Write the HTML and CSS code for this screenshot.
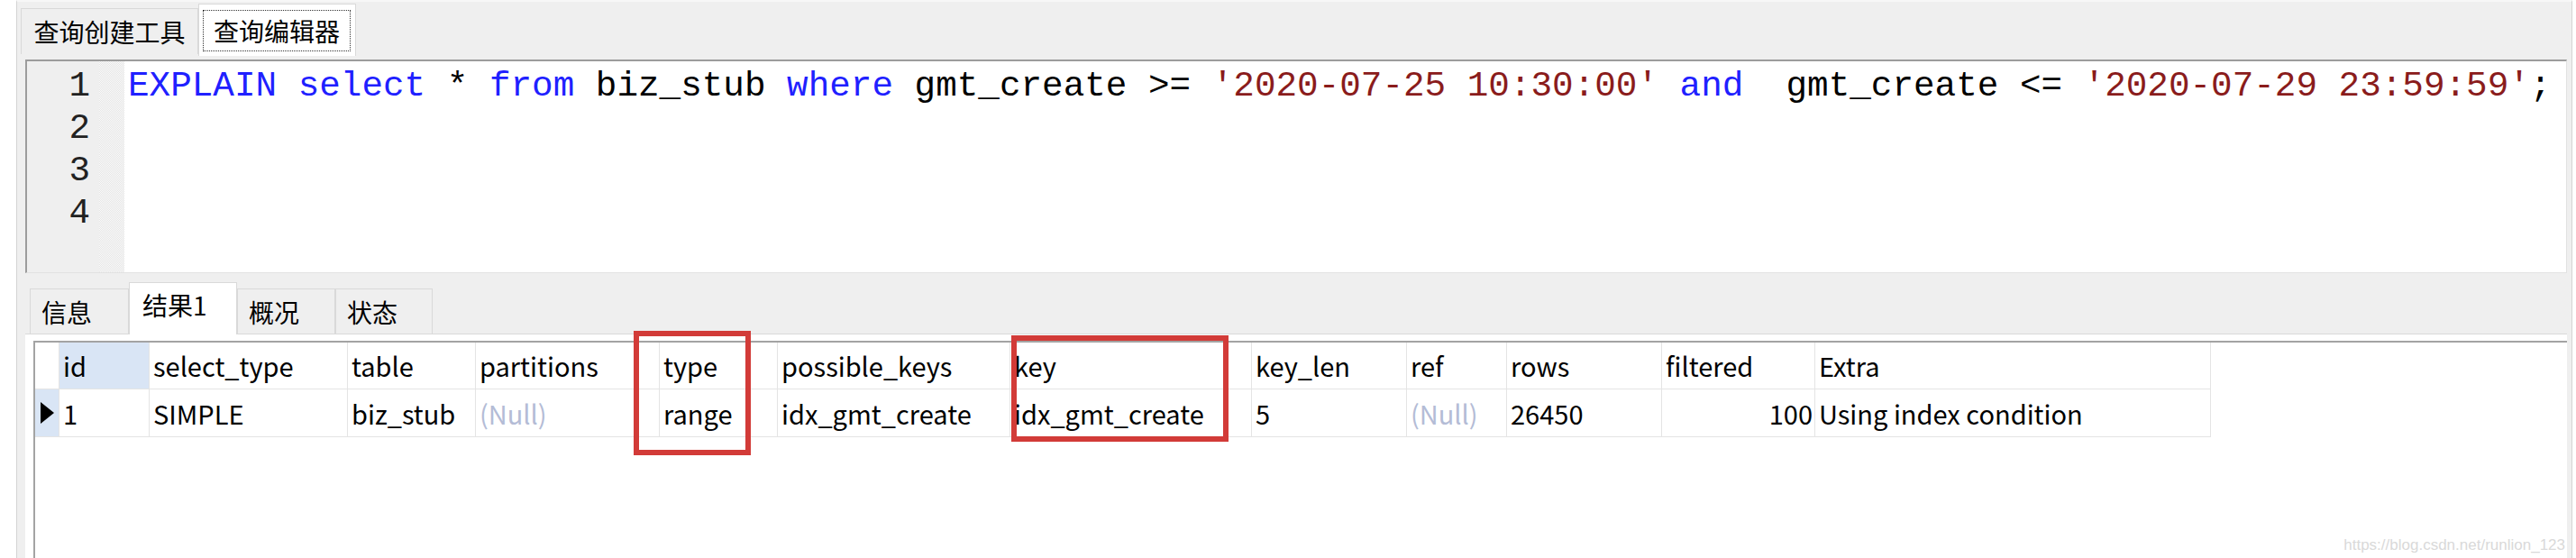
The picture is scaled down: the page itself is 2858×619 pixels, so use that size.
FILE: index.html
```html
<!DOCTYPE html>
<html lang="zh-CN">
<head>
<meta charset="utf-8">
<title>查询编辑器</title>
<link rel="stylesheet" href="styles.css">
</head>
<body>
<div class="app">
  <div class="top-tabs">
    <div class="tab">查询创建工具</div>
    <div class="tab active"><span class="focus">查询编辑器</span></div>
  </div>
  <div class="editor">
    <div class="gutter">
      <div class="ln">1</div>
      <div class="ln">2</div>
      <div class="ln">3</div>
      <div class="ln">4</div>
    </div>
    <div class="strip"></div>
    <div class="code">
      <div class="line"><span class="kw">EXPLAIN</span> <span class="kw">select</span> * <span class="kw">from</span> biz_stub <span class="kw">where</span> gmt_create &gt;= <span class="str">'2020-07-25 10:30:00'</span> <span class="kw">and</span>  gmt_create &lt;= <span class="str">'2020-07-29 23:59:59'</span>;</div>
      <div class="line"></div>
      <div class="line"></div>
      <div class="line"></div>
    </div>
  </div>
  <div class="result">
    <div class="bottom-tabs">
      <div class="btab w110">信息</div>
      <div class="btab active w120">结果1</div>
      <div class="btab w109">概况</div>
      <div class="btab w108">状态</div>
    </div>
    <div class="panel">
      <div class="grid">
        <table>
          <colgroup>
            <col class="c27"><col class="c100"><col class="c220"><col class="c142"><col class="c204"><col class="c131"><col class="c258"><col class="c268"><col class="c172"><col class="c111"><col class="c172"><col class="c170"><col class="c439">
          </colgroup>
          <thead>
            <tr>
              <th class="ind"></th>
              <th class="sel">id</th>
              <th>select_type</th>
              <th>table</th>
              <th>partitions</th>
              <th>type</th>
              <th>possible_keys</th>
              <th>key</th>
              <th>key_len</th>
              <th>ref</th>
              <th>rows</th>
              <th>filtered</th>
              <th>Extra</th>
            </tr>
          </thead>
          <tbody>
            <tr>
              <td class="ind sel"><span class="tri"></span></td>
              <td>1</td>
              <td>SIMPLE</td>
              <td>biz_stub</td>
              <td class="null">(Null)</td>
              <td>range</td>
              <td>idx_gmt_create</td>
              <td>idx_gmt_create</td>
              <td>5</td>
              <td class="null">(Null)</td>
              <td>26450</td>
              <td class="num">100</td>
              <td>Using index condition</td>
            </tr>
          </tbody>
        </table>
      </div>
    </div>
  </div>
</div>
<div class="mark mark-type"></div>
<div class="mark mark-key"></div>
<div class="watermark">https://blog.csdn.net/runlion_123</div>
</body>
</html>
```

FILE: styles.css
```css
* { box-sizing: border-box; }

html, body {
  margin: 0;
  padding: 0;
}

body {
  position: relative;
  width: 2858px;
  height: 619px;
  overflow: hidden;
  background: #ffffff;
  font-family: "Noto Sans CJK SC", "Noto Sans", sans-serif;
  color: #000;
}

.app {
  margin-left: 18px;
  width: 2836px;
  height: 619px;
  overflow: hidden;
  padding-top: 1px;
  background: #efefef;
  border-left: 1px solid #d4d4d4;
  border-right: 1px solid #d4d4d4;
  border-top: 2px solid #f7f7f7;
}

/* top tabs */
.top-tabs {
  display: flex;
  align-items: flex-start;
  height: 59px;
  padding-left: 4px;
}

.tab {
  margin-top: 6px;
  height: 51px;
  width: 197px;
  display: flex;
  align-items: center;
  justify-content: center;
  font-size: 28px;
  line-height: 1;
  background: #efefef;
  border: 1px solid #d9d9d9;
  border-bottom: none;
}

.tab.active {
  margin-top: 1px;
  height: 58px;
  width: 175px;
  background: #ffffff;
  padding: 6px 5px 5px 4px;
}

.focus {
  width: 100%;
  height: 100%;
  display: flex;
  align-items: center;
  justify-content: center;
  border: 1px dotted #333;
}

/* editor */
.editor {
  display: flex;
  margin-top: 4px;
  margin-left: 9px;
  width: 2820px;
  height: 237px;
  background: #ffffff;
  border-top: 2px solid #9c9c9c;
  border-left: 2px solid #9c9c9c;
  border-right: 1px solid #e2e2e2;
  border-bottom: 1px solid #e2e2e2;
  font-family: "Liberation Mono", "Courier New", monospace;
  font-size: 39.3px;
}

.gutter {
  width: 80px;
  flex: none;
  background: #efefef;
  padding-top: 4px;
  padding-right: 10px;
  text-align: right;
  color: #222;
}

.ln, .line {
  height: 47px;
  line-height: 47px;
}

.strip {
  width: 28px;
  flex: none;
  background: repeating-conic-gradient(#e4e4e4 0 25%, #fbfbfb 0 50%) 0 0 / 2px 2px;
}

.code {
  flex: 1;
  padding-top: 4px;
  padding-left: 4px;
  color: #000;
}

.line { white-space: pre; }

.kw { color: #2020ff; }
.str { color: #8a1c1c; }

/* result area */
.result {
  margin-top: 10px;
}

.bottom-tabs {
  display: flex;
  align-items: flex-end;
  height: 57px;
  padding-left: 14px;
}

.btab {
  height: 50px;
  display: flex;
  align-items: center;
  padding-left: 12px;
  font-size: 28px;
  line-height: 1;
  background: #efefef;
  border: 1px solid #d9d9d9;
  border-bottom: none;
}

.btab.active {
  height: 58px;
  margin-bottom: -1px;
  background: #ffffff;
  position: relative;
  padding-bottom: 10px;
  padding-left: 14px;
}

.w110 { width: 110px; }
.w120 { width: 120px; }
.w109 { width: 109px; }
.w108 { width: 108px; }

.panel {
  margin-left: 9px;
  width: 2820px;
  height: 249px;
  background: #ffffff;
  border-top: 1px solid #d9d9d9;
  padding-top: 7px;
  padding-left: 9px;
}

.grid {
  height: 100%;
  border-top: 2px solid #a3a3a3;
  border-left: 2px solid #a3a3a3;
  background: #ffffff;
}

table {
  table-layout: fixed;
  border-collapse: separate;
  border-spacing: 0;
  width: 2414px;
  font-family: "Noto Sans CJK SC", "Noto Sans", sans-serif;
  font-size: 29px;
}

.c27 { width: 27px; }
.c100 { width: 100px; }
.c220 { width: 220px; }
.c142 { width: 142px; }
.c204 { width: 204px; }
.c131 { width: 131px; }
.c258 { width: 258px; }
.c268 { width: 268px; }
.c172 { width: 172px; }
.c111 { width: 111px; }
.c170 { width: 170px; }
.c439 { width: 439px; }

th, td {
  padding: 0 0 0 4px;
  text-align: left;
  font-weight: normal;
  white-space: nowrap;
  overflow: hidden;
  border-right: 1px solid #e4e4e4;
  border-bottom: 1px solid #e4e4e4;
  vertical-align: middle;
  line-height: 1;
}

thead tr { height: 52px; }
tbody tr { height: 53px; }

th.sel, td.sel { background: #d9e5f5; }

.ind { padding: 0; }

.tri {
  display: block;
  margin-left: 6px;
  width: 0;
  height: 0;
  border-top: 12px solid transparent;
  border-bottom: 12px solid transparent;
  border-left: 15px solid #000;
}

.null { color: #b4bcd6; }
.num { text-align: right; padding-right: 2px; }

/* annotations drawn over the grid */
.mark {
  position: absolute;
  border: 6px solid #d23b38;
}

.mark-type {
  left: 703px;
  top: 367px;
  width: 130px;
  height: 138px;
}

.mark-key {
  left: 1122px;
  top: 372px;
  width: 241px;
  height: 118px;
}

.watermark {
  position: absolute;
  right: 12px;
  bottom: 4px;
  font-family: "Liberation Sans", Arial, sans-serif;
  font-size: 17px;
  color: #d9d9d9;
}
```
